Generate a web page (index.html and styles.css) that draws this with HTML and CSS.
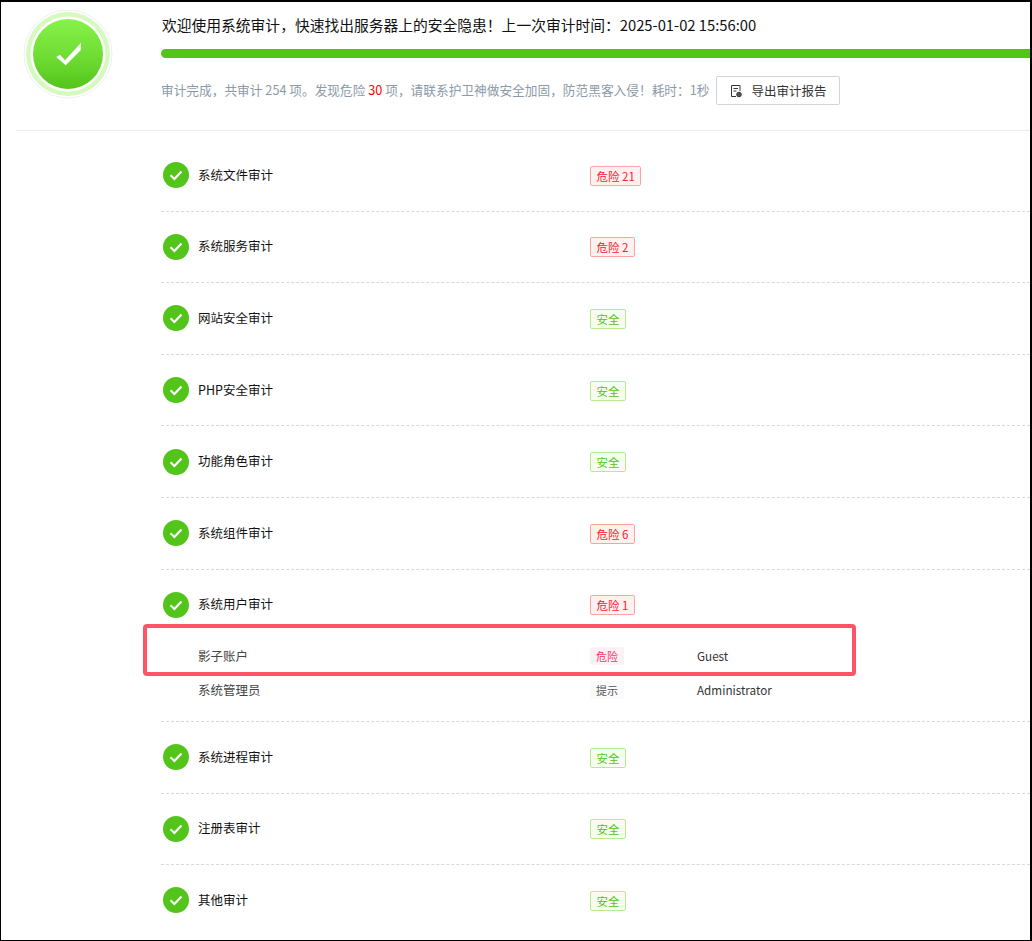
FILE: index.html
```html
<!DOCTYPE html>
<html lang="zh-CN">
<head>
<meta charset="utf-8">
<title>系统审计</title>
<link rel="stylesheet" href="styles.css">
</head>
<body>
<div class="frame">
  <header class="header">
    <svg class="hero" width="90" height="90" viewBox="0 0 90 90">
      <defs>
        <linearGradient id="g" x1="0" y1="0" x2="0" y2="1">
          <stop offset="0" stop-color="#86f24a"/>
          <stop offset="0.55" stop-color="#6fdc34"/>
          <stop offset="1" stop-color="#52c41a"/>
        </linearGradient>
      </defs>
      <circle cx="45" cy="44" r="44" fill="#fff" stroke="#f0f0f3" stroke-width="1"/>
      <circle cx="45" cy="44" r="42" fill="#d6f9bf"/>
      <circle cx="45" cy="44" r="37.5" fill="#fff"/>
      <circle cx="45" cy="44" r="35" fill="url(#g)"/>
      <path d="M33.3 47 37 44.7 42 50.3 58 32.7 57.7 40.3 42.7 55.3Z" fill="#fff"/>
    </svg>
    <div class="summary">
      <div class="title">欢迎使用系统审计，快速找出服务器上的安全隐患！上一次审计时间：2025-01-02 15:56:00</div>
      <div class="progress"></div>
      <div class="status">
        <span class="status-text">审计完成，共审计 254 项。发现危险 <b class="count">30</b> 项，请联系护卫神做安全加固，防范黑客入侵！耗时：1秒</span>
        <button class="export" type="button">
          <svg width="12" height="14" viewBox="0 0 12 14" fill="none" stroke="#333" stroke-width="1">
            <path d="M6 12.5H1.5V1.5H10V7"/>
            <path d="M3.5 4.5H8M3.5 7H6.5"/>
            <circle cx="9" cy="10.5" r="2.3" fill="#555"/>
          </svg>
          导出审计报告
        </button>
      </div>
    </div>
  </header>
  <main class="list">
    <section class="row">
      <div class="head"><svg class="ok" viewBox="0 0 26 26"><circle cx="13" cy="13" r="13" fill="#52c41a"/><path d="M7.5 13.3 11.4 17 18.5 9.6" fill="none" stroke="#fff" stroke-width="2.2"/></svg><span class="name">系统文件审计</span><span class="tag danger">危险 21</span></div>
    </section>
    <section class="row">
      <div class="head"><svg class="ok" viewBox="0 0 26 26"><circle cx="13" cy="13" r="13" fill="#52c41a"/><path d="M7.5 13.3 11.4 17 18.5 9.6" fill="none" stroke="#fff" stroke-width="2.2"/></svg><span class="name">系统服务审计</span><span class="tag danger">危险 2</span></div>
    </section>
    <section class="row">
      <div class="head"><svg class="ok" viewBox="0 0 26 26"><circle cx="13" cy="13" r="13" fill="#52c41a"/><path d="M7.5 13.3 11.4 17 18.5 9.6" fill="none" stroke="#fff" stroke-width="2.2"/></svg><span class="name">网站安全审计</span><span class="tag safe">安全</span></div>
    </section>
    <section class="row">
      <div class="head"><svg class="ok" viewBox="0 0 26 26"><circle cx="13" cy="13" r="13" fill="#52c41a"/><path d="M7.5 13.3 11.4 17 18.5 9.6" fill="none" stroke="#fff" stroke-width="2.2"/></svg><span class="name">PHP安全审计</span><span class="tag safe">安全</span></div>
    </section>
    <section class="row">
      <div class="head"><svg class="ok" viewBox="0 0 26 26"><circle cx="13" cy="13" r="13" fill="#52c41a"/><path d="M7.5 13.3 11.4 17 18.5 9.6" fill="none" stroke="#fff" stroke-width="2.2"/></svg><span class="name">功能角色审计</span><span class="tag safe">安全</span></div>
    </section>
    <section class="row">
      <div class="head"><svg class="ok" viewBox="0 0 26 26"><circle cx="13" cy="13" r="13" fill="#52c41a"/><path d="M7.5 13.3 11.4 17 18.5 9.6" fill="none" stroke="#fff" stroke-width="2.2"/></svg><span class="name">系统组件审计</span><span class="tag danger">危险 6</span></div>
    </section>
    <section class="row">
      <div class="head"><svg class="ok" viewBox="0 0 26 26"><circle cx="13" cy="13" r="13" fill="#52c41a"/><path d="M7.5 13.3 11.4 17 18.5 9.6" fill="none" stroke="#fff" stroke-width="2.2"/></svg><span class="name">系统用户审计</span><span class="tag danger">危险 1</span></div>
      <div class="subs">
        <div class="sub"><span class="sub-name">影子账户</span><span class="pill pill-danger">危险</span><span class="value">Guest</span></div>
        <div class="sub"><span class="sub-name">系统管理员</span><span class="pill pill-info">提示</span><span class="value">Administrator</span></div>
        <div class="highlight"></div>
      </div>
    </section>
    <section class="row">
      <div class="head"><svg class="ok" viewBox="0 0 26 26"><circle cx="13" cy="13" r="13" fill="#52c41a"/><path d="M7.5 13.3 11.4 17 18.5 9.6" fill="none" stroke="#fff" stroke-width="2.2"/></svg><span class="name">系统进程审计</span><span class="tag safe">安全</span></div>
    </section>
    <section class="row">
      <div class="head"><svg class="ok" viewBox="0 0 26 26"><circle cx="13" cy="13" r="13" fill="#52c41a"/><path d="M7.5 13.3 11.4 17 18.5 9.6" fill="none" stroke="#fff" stroke-width="2.2"/></svg><span class="name">注册表审计</span><span class="tag safe">安全</span></div>
    </section>
    <section class="row last">
      <div class="head"><svg class="ok" viewBox="0 0 26 26"><circle cx="13" cy="13" r="13" fill="#52c41a"/><path d="M7.5 13.3 11.4 17 18.5 9.6" fill="none" stroke="#fff" stroke-width="2.2"/></svg><span class="name">其他审计</span><span class="tag safe">安全</span></div>
    </section>
  </main>
</div>
</body>
</html>
```
FILE: styles.css
```css
* { box-sizing: border-box; }
html, body { margin: 0; padding: 0; background: #fff; }
body { font-family: "Noto Sans CJK SC", "Noto Sans", sans-serif; color: #222; overflow: hidden; }
.frame { width: 1032px; height: 941px; border: 1px solid #000; border-top-width: 2px; border-right-width: 2px; overflow: hidden; }
.header { display: flex; margin-left: 15px; padding-left: 7px; height: 129px; border-bottom: 1px solid #eee; }
.hero { flex: none; margin-top: 8px; }
.summary { flex: 1; min-width: 0; margin-left: 48px; padding-top: 12px; }
.title { font-size: 14.78px; line-height: 22px; color: #111; white-space: nowrap; text-indent: 1px; }
.progress { height: 9px; margin-top: 13px; background: #52c41a; border-radius: 5px 0 0 5px; }
.status { display: flex; align-items: center; margin-top: 18px; font-size: 12.7px; color: #8c9aa8; white-space: nowrap; }
.status-text { margin-top: -3px; }
.count { font-weight: 400; color: #f00; }
.export { display: flex; align-items: center; justify-content: flex-start; gap: 9px; height: 29px; width: 124px; margin-left: 7px; padding: 0 13px; background: #fff; border: 1px solid #d4d4dc; border-radius: 2px; font: inherit; font-size: 12.5px; color: #333; }
.list { margin-left: 160px; padding-top: 9px; }
.row { border-bottom: 1px dashed #d9d9d9; }
.row.last { border-bottom: 0; }
.head { display: grid; grid-template-columns: 37px 392px auto; justify-content: start; align-items: center; padding: 21.8px 0; height: 70.6px; }
.ok { width: 26px; height: 26px; margin-left: 2px; display: block; }
.name { font-size: 12.5px; color: #111; margin-top: -2px; }
.tag { justify-self: start; height: 20px; margin-top: 1px; padding: 0 5.5px; border: 1px solid; border-radius: 2px; font-size: 11.5px; line-height: 18px; }
.danger { background: #fff1f0; border-color: #ffa39e; color: #f5222d; }
.safe { background: #f6ffed; border-color: #b7eb8f; color: #52c41a; }
.subs { position: relative; margin-top: -1.5px; padding-bottom: 14.3px; }
.sub { display: grid; grid-template-columns: 392px 107px 1fr; align-items: center; height: 34px; padding-left: 37px; font-size: 12.5px; color: #444; }
.pill { justify-self: start; width: 34px; height: 18px; text-align: center; border-radius: 2px; font-size: 11px; line-height: 18px; }
.pill-danger { background: #fff0f3; color: #f5326e; }
.pill-info { background: #fafafa; color: #555; }
.value { font-size: 11.7px; color: #333; }
.highlight { position: absolute; left: -18px; top: -15px; width: 713px; height: 52px; border: 4px solid #ff5468; border-radius: 4px; pointer-events: none; }
```
